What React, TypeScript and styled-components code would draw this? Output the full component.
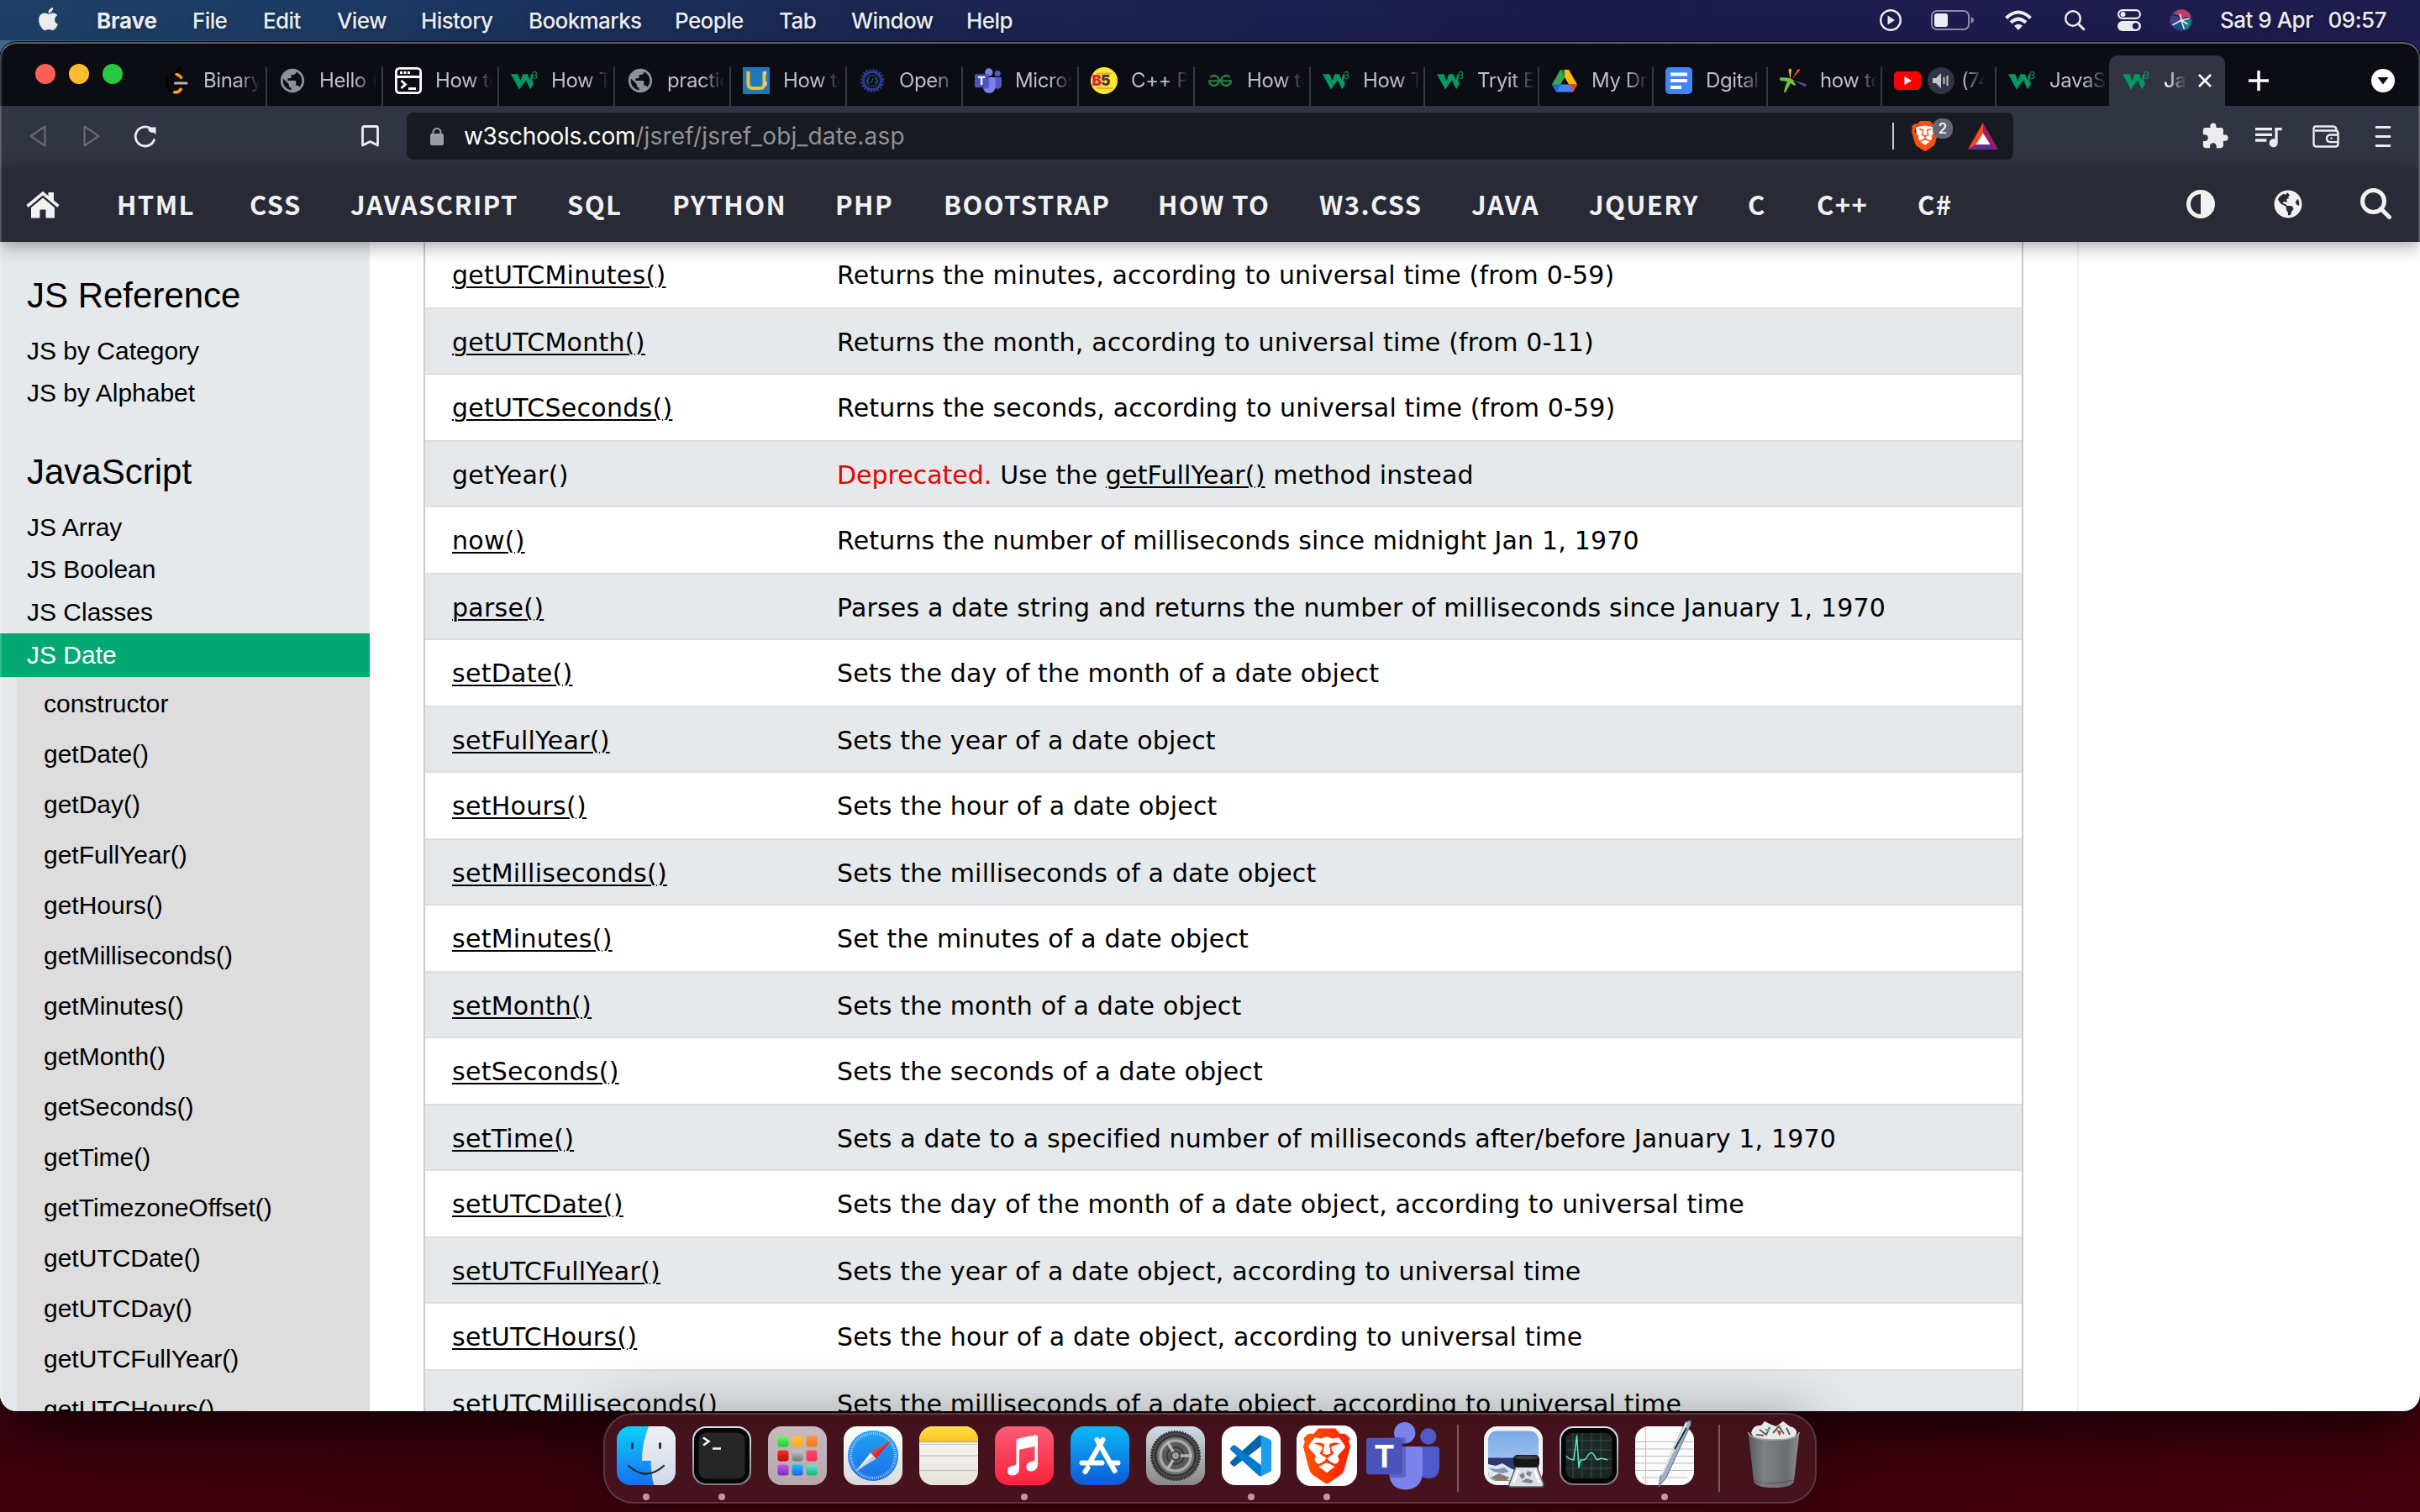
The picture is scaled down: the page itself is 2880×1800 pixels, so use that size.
import React from "react";
import styled, { createGlobalStyle, css } from "styled-components";
import { FaApple, FaGlobeAmericas } from "react-icons/fa";
import { SiBrave, SiGeeksforgeeks } from "react-icons/si";
import { MdExtension, MdPublic, MdQueueMusic } from "react-icons/md";

const ui = `Inter, "Liberation Sans", sans-serif`;
const arial = `"Liberation Sans", Arial, sans-serif`;
const verdana = `"DejaVu Sans", Verdana, sans-serif`;
const navFont = `"Noto Sans CJK JP", "Noto Sans", sans-serif`;

const Global = createGlobalStyle`
  * { box-sizing: border-box; }
  html, body { margin: 0; padding: 0; }
  svg { display: block; overflow: visible; flex: none; }
`;

const Desktop = styled.div`
  width: 2880px;
  height: 1800px;
  overflow: hidden;
  display: flex;
  flex-direction: column;
  align-items: center;
  background:
    linear-gradient(90deg, #44698c 0, #262a58 20%, #201e50 60%, #232056 100%) top / 100% 120px no-repeat,
    linear-gradient(90deg, #40000f 0, #3a000d 25%, #3c000d 70%, #47000f 100%);
`;

/* ---------- system menu bar ---------- */

const MenuBar = styled.header`
  width: 100%;
  height: 48px;
  flex: none;
  display: flex;
  align-items: center;
  padding: 0 40px 0 42px;
  margin-bottom: 2px;
  background: linear-gradient(90deg, #1e4068 0, #1d3c65 12%, #1b2f5a 25%, #1a2650 37%, #1c2050 52%, #1c1b4b 66%, #1e1d4e 100%);
  color: #ecedf1;
  font: 500 26px/48px ${ui};
  letter-spacing: -0.6px;
  text-shadow: 0 2px 5px rgba(0, 0, 0, 0.35);
`;

const AppleSlot = styled.div`
  width: 73px;
  display: flex;
  margin-top: -4px;
`;

const MenuItem = styled.span<{ $w: number; $bold?: boolean }>`
  width: ${(p) => p.$w}px;
  flex: none;
  white-space: nowrap;
  padding-top: 1px;
  ${(p) => p.$bold && css`font-weight: 700; letter-spacing: -0.2px;`}
`;

const StatusArea = styled.div`
  margin-left: auto;
  display: flex;
  align-items: center;
  white-space: pre;
`;

const StatusIcon = styled.span<{ $w: number }>`
  width: ${(p) => p.$w}px;
  display: flex;
`;

const Clock = styled.span`
  width: 198px;
  display: flex;
  justify-content: space-between;
  letter-spacing: -0.5px;
`;

/* ---------- browser window ---------- */

const Window = styled.section`
  position: relative;
  width: 100%;
  height: 1630px;
  flex: none;
  display: flex;
  flex-direction: column;
  border-radius: 20px;
  overflow: hidden;
  box-shadow: 0 0 0 1px #05050a, 0 36px 60px -6px rgba(0, 0, 0, 0.62);
  &::after {
    content: "";
    position: absolute;
    inset: 0;
    border-radius: 20px;
    pointer-events: none;
    z-index: 5;
    box-shadow: inset 0 2px 0 rgba(255, 255, 255, 0.34), inset 2px 0 0 rgba(255, 255, 255, 0.2),
      inset -2px 0 0 rgba(255, 255, 255, 0.2);
  }
`;

const TabStrip = styled.div`
  height: 76px;
  flex: none;
  display: flex;
  align-items: flex-end;
  background: #0c0d14;
`;

const TrafficLights = styled.div`
  width: 180px;
  height: 76px;
  display: flex;
  align-items: center;
  gap: 16px;
  padding-left: 42px;
`;

const Light = styled.i<{ $c: string }>`
  width: 24px;
  height: 24px;
  border-radius: 50%;
  background: ${(p) => p.$c};
`;

const TabBox = styled.div<{ $w: number; $active?: boolean; $line?: boolean }>`
  width: ${(p) => p.$w}px;
  height: ${(p) => (p.$active ? 60 : 46)}px;
  flex: none;
  display: flex;
  align-items: center;
  padding: ${(p) => (p.$active ? "0 0 0 16px" : "0 0 14px 14px")};
  font: 400 24px/30px ${ui};
  letter-spacing: -0.4px;
  color: #bdbec2;
  border-right: ${(p) => (p.$line ? "2px solid #383939" : "0")};
  ${(p) => p.$active && css`
    background: #313443;
    color: #fff;
    font-weight: 500;
    border-radius: 10px 10px 0 0;
  `}
`;

const Favicon = styled.span`
  width: 32px;
  height: 32px;
  display: flex;
  align-items: center;
  justify-content: center;
  flex: none;
`;

const TabTitle = styled.span<{ $w: number; $gap: number }>`
  width: ${(p) => p.$w}px;
  margin-left: ${(p) => p.$gap}px;
  overflow: hidden;
  white-space: nowrap;
  mask-image: linear-gradient(90deg, #000 calc(100% - 26px), transparent);
`;

const AudioBadge = styled.span`
  width: 32px;
  height: 32px;
  margin-left: 8px;
  border-radius: 50%;
  background: #313443;
  display: flex;
  align-items: center;
  justify-content: center;
  flex: none;
`;

const CloseSlot = styled.span`
  margin-left: 14px;
`;

const StripButtons = styled.div`
  flex: 1;
  height: 60px;
  display: flex;
  align-items: center;
  justify-content: space-between;
  padding: 0 30px 0 28px;
`;

const Toolbar = styled.div`
  height: 74px;
  flex: none;
  display: flex;
  align-items: center;
  background: #313443;
  padding: 0 35px 2px;
`;

const ToolSlot = styled.span<{ $w: number }>`
  width: ${(p) => p.$w}px;
  display: flex;
  flex: none;
`;

const AddressBar = styled.div`
  width: 1912px;
  height: 56px;
  border-radius: 8px;
  background: #181a21;
  display: flex;
  align-items: center;
  padding: 0 18px 0 28px;
  font: 400 28px/56px ${ui};
  color: #909295;
  margin-right: 223px;
`;

const Host = styled.span`
  color: #fff;
  letter-spacing: -0.3px;
  margin-left: 24px;
`;

const Path = styled.span`
  letter-spacing: 0.2px;
  flex: 1;
`;

const Divider = styled.i`
  width: 2px;
  height: 32px;
  background: #c9cacd;
  margin-right: 22px;
`;

const Shield = styled.span`
  position: relative;
  width: 66px;
  display: flex;
  color: #fb542b;
`;

const ShieldCount = styled.b`
  position: absolute;
  left: 24px;
  top: -3px;
  width: 24px;
  height: 24px;
  border-radius: 10px;
  background: #636674;
  color: #fff;
  font: 500 17px/24px ${ui};
  text-align: center;
`;

const ToolIcons = styled.div`
  display: flex;
  align-items: center;
  color: #ececee;
`;

/* ---------- site ---------- */

const SiteNav = styled.nav`
  position: relative;
  z-index: 2;
  height: 88px;
  flex: none;
  display: flex;
  align-items: center;
  background: #282a35;
  padding: 0 34px 0 31px;
  color: #f1f1f1;
  box-shadow: 0 4px 20px rgba(0, 0, 0, 0.38);
`;

const HomeSlot = styled.span`
  width: 108px;
`;

const NavLink = styled.a<{ $w: number }>`
  width: ${(p) => p.$w}px;
  font: 700 31px/86px ${navFont};
  padding-bottom: 2px;
  letter-spacing: 1.4px;
  white-space: nowrap;
`;

const NavTools = styled.div`
  margin-left: auto;
  display: flex;
  align-items: center;
  gap: 69.5px;
  padding-bottom: 3px;
`;

const Page = styled.div`
  flex: 1;
  min-height: 0;
  display: flex;
  background: #fff;
  overflow: hidden;
  color: #000;
`;

const Sidebar = styled.aside`
  width: 440px;
  flex: none;
  padding-top: 38px;
  background: #e5e9eb;
  font: 400 30px/52.5px ${arial};
`;

const SideHeading = styled.h2`
  margin: 0 0 15.7px;
  padding-left: 32px;
  font: 400 42px/51px ${arial};
  height: 50px;
  ul + & {
    margin-top: 43px;
  }
`;

const SideList = styled.ul`
  list-style: none;
  margin: 0;
  padding: 0;
`;

const SideItem = styled.li<{ $on?: boolean }>`
  padding-left: 32px;
  height: ${(p) => (p.$on ? 52 : 50.67)}px;
  ${(p) => p.$on && css`background: #00a971; color: #fff;`}
`;

const SubList = styled(SideList)`
  margin-left: 20px;
  padding: 2px 0 0 32px;
  background: #ddd;
  line-height: 60px;
`;

const Main = styled.main`
  width: 2034px;
  flex: none;
  padding-left: 64px;
  border-right: 2px solid #f1f1f1;
`;

const RefTable = styled.div`
  width: 1904px;
  height: 100%;
  border: solid #ccc;
  border-width: 0 2px;
  font: 400 30px/35px ${verdana};
  letter-spacing: 0.17px;
`;

const Row = styled.div<{ $alt: boolean }>`
  display: grid;
  grid-template-columns: 458px 1fr;
  align-items: center;
  height: ${(p) => (p.$alt ? 78 : 80)}px;
  padding: ${(p) => (p.$alt ? "3px 0 0 32px" : "0 0 0 32px")};
  border-bottom: 2px solid #ddd;
  background: ${(p) => (p.$alt ? "#e5e9eb" : "#fff")};
  white-space: nowrap;
`;

const Link = styled.a`
  text-decoration: underline;
  text-decoration-thickness: 2px;
  text-underline-offset: 2.5px;
`;

const Name = styled.span`
  letter-spacing: 0.28px;
`;

const Deprecated = styled.span`
  color: #ee0000;
  letter-spacing: 0;
`;

/* ---------- dock ---------- */

const Dock = styled.footer`
  position: relative;
  z-index: 6;
  width: 1444px;
  height: 108px;
  flex: none;
  margin-top: 2px;
  padding-left: 4px;
  display: flex;
  border-radius: 36px;
  border: 2px solid #613540;
  background: linear-gradient(#42121c, #46121e);
  box-shadow: 0 0 70px rgba(0, 0, 0, 0.3), 0 0 0 1px rgba(0, 0, 0, 0.4);
`;

const DockItem = styled.div`
  width: 90px;
  padding-top: 14px;
  display: flex;
  flex-direction: column;
  align-items: center;
  gap: 10px;
  flex: none;
`;

const RunningDot = styled.i`
  width: 8px;
  height: 8px;
  border-radius: 50%;
  background: #c8959f;
`;

const DockLine = styled.i<{ $w: number }>`
  width: ${(p) => p.$w}px;
  display: flex;
  justify-content: center;
  padding-top: 12px;
  &::before {
    content: "";
    width: 2px;
    height: 80px;
    background: #83555f;
  }
`;

/* ---------- favicons ---------- */

const W3 = () => (
  <svg width="32" height="32" viewBox="0 0 32 32" fill="#059862" fontFamily="Inter, sans-serif">
    <path d="M0 8.300H8.500L11.500 16l2.700-7.700H20l2.500 7 1.800-7H27l-2 6.200 2 5.500-4 6.300L18 15.500 9.800 26.500z" />
    <text x="24.800" y="14" fontSize="12" fontWeight="400">3</text>
  </svg>
);

function TeamsArt() {
  return (
    <>
      <circle cx="65.800" cy="12" r="9.700" fill="#5059c9" />
      <path d="M50 24h25q4 0 4 4v20q0 14-13 14-9 0-14-8z" fill="#5059c9" />
      <circle cx="37.700" cy="7.700" r="12.700" fill="#7b83eb" />
      <path d="M19 24h36q4 0 4 4v27q-1 20-20.500 20.500Q20 75 19 55z" fill="#7b83eb" />
      <path d="M19 24h20v33q0 4-4 4H20q-1-3-1-6zM25 13h10q4 0 4 4v3q-8 2-14-7z" fill="#4049a0" opacity=".5" />
      <rect x="-8" y="13.700" width="43" height="43.500" rx="4" fill="#4b53bc" />
      <text x="13.500" y="48.500" fontSize="37" fontWeight="700" textAnchor="middle" fill="#fff" fontFamily="Inter, sans-serif">T</text>
    </>
  );
}

const favicons: Record<string, React.ReactNode> = {
  leet: (
    <svg width="32" height="32" viewBox="0 0 32 32" fill="none" strokeWidth="3.200" strokeLinecap="round">
      <path d="M19.500 2.500L6.500 13.500q-4.500 5-1 10l4 5" stroke="#020204" />
      <path d="M15 9.500q2.500-2.500 7.500 4M12.500 29q5 3 9.500-4" stroke="#ffa116" strokeLinecap="butt" strokeWidth="3.600" />
      <path d="M14.500 19H28" stroke="#b3b3b3" />
    </svg>
  ),
  globe: <MdPublic size={34} color="#8c929b" />,
  term: (
    <svg width="32" height="32" viewBox="0 0 32 32" fill="none" stroke="#fff" strokeWidth="2.800">
      <rect x="1.400" y="1.400" width="29.200" height="29.200" rx="4" />
      <path d="M1 11.500H31M7.500 16l5 4.500-5 4.500M16 25.500h9" />
      <path d="M6 6.500h3M10.500 6.500h3M15 6.500h3" strokeWidth="3" />
    </svg>
  ),
  w3: <W3 />,
  u: (
    <svg width="32" height="32" viewBox="0 0 32 32" fill="none">
      <rect width="32" height="32" fill="#1f78b8" />
      <path d="M6.500 5v15q0 5 5 5h9q5 0 5-5V5" stroke="#f0c22c" strokeWidth="4" />
      <path d="M26.500 5v4M27 17v5" stroke="#e8c6d8" strokeWidth="3" />
    </svg>
  ),
  mandala: (
    <svg width="30" height="30" viewBox="0 0 30 30" fill="none" stroke="#2b3a92">
      <circle cx="15" cy="15" r="13" strokeWidth="2.500" strokeDasharray="2.200 1.900" />
      <circle cx="15" cy="15" r="10.500" strokeWidth="3" />
      <circle cx="15" cy="15" r="6.500" strokeWidth="1.200" stroke="#24506e" />
      <path d="M12 12l-3 3 3 3M18 12l3 3-3 3M16 12l-2 6" stroke="#2f5fae" />
    </svg>
  ),
  teams: (
    <svg width="32" height="32" viewBox="-8 -5 87 80">
      <TeamsArt />
    </svg>
  ),
  b5: (
    <svg width="32" height="32" viewBox="0 0 32 32" fontFamily="Inter, sans-serif" fontWeight="900">
      <circle cx="16" cy="16" r="16" fill="#ffe92b" />
      <path d="M7 7.500h18M7 25h19" stroke="#f7a13c" strokeWidth="2" />
      <text x="1.500" y="22" fontSize="17" fill="#e0223c">B</text>
      <text x="12" y="22" fontSize="17" fill="#4a2b4a">5</text>
    </svg>
  ),
  gfg: <SiGeeksforgeeks size={28} color="#2a7d45" />,
  drive: (
    <svg width="30" height="27" viewBox="0 0 30 27">
      <path d="M10 0L0 17.500 5 26.500 15 9z" fill="#34a853" />
      <path d="M10 0h10l10 17.500H20z" fill="#fbbc04" />
      <path d="M10 0h5l0 9z" fill="#188038" />
      <path d="M5 26.500L10 17.500H30L25 26.500z" fill="#4285f4" />
      <path d="M20 17.500H30L25 26.500z" fill="#ea4335" />
      <path d="M0 17.500h10L5 26.500z" fill="#1967d2" />
    </svg>
  ),
  docs: (
    <svg width="32" height="32" viewBox="0 0 32 32">
      <rect width="32" height="32" rx="5" fill="#4285f4" />
      <path d="M6 8.500h20M6 16h20M6 24h13" stroke="#fff" strokeWidth="4" />
    </svg>
  ),
  splash: (
    <svg width="32" height="32" viewBox="0 0 32 32">
      <path d="M12.500 15L10.500 3q2-3 3.500 0z" fill="#f4b942" />
      <path d="M15 14l6-11q3-2 3 1z" fill="#e5484d" />
      <path d="M16 15.500l14 4q3 2 0 3.500z" fill="#5b4a9c" />
      <path d="M12 13L1 12q-2 2 0 4l8 1q-3 6-4 13l2 0 6-11q2 2 5 3l1-1q-2-3-3-6z" fill="#6cc644" />
    </svg>
  ),
  yt: (
    <svg width="32" height="22" viewBox="0 0 32 22">
      <rect width="32" height="22" rx="5" fill="#f00" />
      <path d="M12.500 6v10l8.500-5z" fill="#fff" />
    </svg>
  ),
};

type TabData = { icon: string; title: string; w: number };
const tabs: TabData[] = [
  ["leet", "Binary S", 138], ["globe", "Hello (", 138], ["term", "How to", 138], ["w3", "How TO", 138],
  ["globe", "practic", 138], ["u", "How to", 138], ["mandala", "Open S", 138], ["teams", "Micros", 138],
  ["b5", "C++ Pr", 138], ["gfg", "How to", 138], ["w3", "How TO", 136], ["w3", "Tryit Ed", 136],
  ["drive", "My Driv", 136], ["docs", "Dgital", 136], ["splash", "how to", 136],
].map(([icon, title, w]) => ({ icon, title, w }) as TabData);

/* ---------- dock icons ---------- */

const Tile = ({ fill, children, r = 16 }: { fill: string; children?: React.ReactNode; r?: number }) => (
  <svg width="70" height="70" viewBox="0 0 70 70">
    <rect width="70" height="70" rx={r} fill={fill} />
    {children}
  </svg>
);

const Gradients = () => (
  <svg width="0" height="0">
    <defs>
      {[
        ["gFinder", "#0bd0fb", "#1a6ff2"], ["gFace", "#f1f0f2", "#cfd9e8"], ["gMetal", "#d6e6f2", "#7b7b7b"],
        ["gLaunch", "#c6bbc0", "#b8a6ab"], ["gWhite", "#ffffff", "#dadada"], ["gSafari", "#1fa5f3", "#1e6de8"],
        ["gYellow", "#fbe14e", "#fec21a"], ["gNote", "#faf9f8", "#e6e3dc"], ["gMusic", "#fb5c74", "#fa233b"],
        ["gStore", "#0bb9f7", "#1158d8"], ["gGear", "#cfdde6", "#8a8783"], ["gSky", "#7aa8e6", "#b6d4f6"],
        ["gGreen", "#7cee73", "#13cf30"], ["gGold", "#fdc837", "#faa918"],
        ["gOrange", "#f5943a", "#f07c1c"], ["gRed", "#f3352c", "#b90606"], ["gGrey", "#c3cbd0", "#70757a"],
        ["gPink", "#fb4e70", "#fa2c50"], ["gPurple", "#c45bea", "#7a2bbf"], ["gBlue", "#16c9fb", "#1362ea"],
        ["gTeal", "#6ae7cf", "#16b57e"],
      ].map(([id, a, b]) => (
        <linearGradient key={id} id={id} x2="0" y2="1">
          <stop stopColor={a} />
          <stop offset="1" stopColor={b} />
        </linearGradient>
      ))}
      <linearGradient id="gLion">
        <stop stopColor="#ff5500" />
        <stop offset="1" stopColor="#ff1e00" />
      </linearGradient>
      <linearGradient id="gGlass">
        <stop stopColor="#55595c" />
        <stop offset=".3" stopColor="#7d8284" />
        <stop offset=".75" stopColor="#6a6e71" />
        <stop offset="1" stopColor="#8b8f92" />
      </linearGradient>
    </defs>
  </svg>
);

const launchFills = ["gGreen", "gGold", "gOrange", "gRed", "gGrey", "gPink", "gPurple", "gBlue", "gTeal"];

const dockApps: { name: string; running?: boolean; art: React.ReactNode }[] = [
  {
    name: "finder", running: true,
    art: (
      <Tile fill="url(#gFinder)">
        <path d="M38 0h16a16 16 0 0 1 16 16v38a16 16 0 0 1-16 16H44q-3-13-3.500-29H30Q30 20 38 0z" fill="url(#gFace)" />
        <path d="M18.500 20.500v5M51.500 20.500v5" stroke="#28323f" strokeWidth="3" strokeLinecap="round" />
        <path d="M14 47q21 19 42 0" fill="none" stroke="#1f2a38" strokeWidth="2.200" strokeLinecap="round" />
      </Tile>
    ),
  },
  {
    name: "terminal", running: true,
    art: (
      <Tile fill="url(#gMetal)">
        <rect x="2" y="2" width="66" height="66" rx="14.500" fill="#050505" />
        <rect x="7.500" y="7.500" width="55" height="55" rx="9" fill="#262626" />
        <path d="M13 13.500l6.500 4.500-6.500 4.500M24 26.500h10" fill="none" stroke="#fff" strokeWidth="2.500" />
      </Tile>
    ),
  },
  {
    name: "launchpad",
    art: (
      <Tile fill="url(#gLaunch)">
        {launchFills.map((f, i) => (
          <rect key={f} x={11.5 + (i % 3) * 17} y={11.5 + Math.floor(i / 3) * 17} width="13" height="13" rx="3" fill={`url(#${f})`} />
        ))}
      </Tile>
    ),
  },
  {
    name: "safari",
    art: (
      <Tile fill="url(#gWhite)">
        <circle cx="35" cy="35" r="30" fill="url(#gSafari)" />
        <circle cx="35" cy="35" r="26.500" fill="none" stroke="#b9dcfa" strokeWidth="3.500" strokeDasharray=".8 1.500" />
        <path d="M57 16L32 31.500l6.500 7z" fill="#f0403a" />
        <path d="M14.500 53.500L32 31.500l6.500 7z" fill="#f2f2f2" />
        <path d="M57 16L35.300 35l3.200 3.500z" fill="#c92b30" />
        <path d="M14.500 53.500L35.300 35l3.200 3.500z" fill="#c9cdd2" />
      </Tile>
    ),
  },
  {
    name: "notes",
    art: (
      <Tile fill="url(#gNote)">
        <path d="M0 18v-2a16 16 0 0 1 16-16h38a16 16 0 0 1 16 16v2z" fill="url(#gYellow)" />
        <path d="M0 18.500h70" stroke="#b9b0a0" strokeWidth="1.500" />
        <path d="M1 21.500h68" stroke="#a9a6a0" strokeWidth="1.200" strokeDasharray="1.200 1.200" />
        <path d="M0 35h70M0 52.500h70" stroke="#cac8c4" strokeWidth="1.300" />
      </Tile>
    ),
  },
  {
    name: "music", running: true,
    art: (
      <Tile fill="url(#gMusic)">
        <path d="M25.500 17.500q0-2.500 2.500-3l20-4q3-.5 3 2V45q-.5 8.500-8 8.500-5.500 0-5.500-5 0-5.500 6-6.500 4-.5 4-3V24l-18.500 3.800V50q-.5 8.500-8 8.500-6 0-6-5.200 0-5.300 6-6.300 4-.5 4.500-3z" fill="#fff" />
      </Tile>
    ),
  },
  {
    name: "appstore",
    art: (
      <Tile fill="url(#gStore)">
        <g fill="none" stroke="#fff" strokeWidth="6" strokeLinecap="round">
          <path d="M38.500 16L23.500 42M31.500 16L52.500 53M13.500 43.500h24M47 43.500h9.500M20.500 49.500l-3 4.500" />
        </g>
      </Tile>
    ),
  },
  {
    name: "settings",
    art: (
      <Tile fill="url(#gGear)">
        <circle cx="35" cy="35" r="29" fill="#4a4a4a" />
        <circle cx="35" cy="35" r="28.500" fill="none" stroke="#2c2c2c" strokeWidth="3" strokeDasharray="1.800 1.500" />
        <circle cx="35" cy="35" r="23.500" fill="#6e6e6e" stroke="#2e2e2e" strokeWidth="2" />
        <circle cx="35" cy="35" r="18" fill="#5a5a58" stroke="#a8a8a8" strokeWidth="3.500" />
        <circle cx="35" cy="35" r="10" fill="none" stroke="#3a3a3a" strokeWidth="2" />
        <path d="M35 35h20M35 35L25 18M35 35L25 52" stroke="#b5b5b5" strokeWidth="3.500" />
        <circle cx="35" cy="35" r="5" fill="#9c9c9c" stroke="#333" strokeWidth="1.500" />
      </Tile>
    ),
  },
  {
    name: "vscode", running: true,
    art: (
      <Tile fill="#fff">
        <g transform="translate(10 10.500) scale(.49)">
          <path d="M96.460 10.800L75.860.87a6.230 6.230 0 0 0-7.100 1.200L1.300 63.580a4.170 4.170 0 0 0 0 6.170l5.500 5a4.170 4.170 0 0 0 5.300.24l81.300-61.700c2.700-2.100 6.600-.1 6.600 3.300z" fill="#0065a9" />
          <path d="M96.460 89.200l-20.600 9.900a6.230 6.230 0 0 1-7.100-1.200L1.300 36.400a4.170 4.170 0 0 1 0-6.170l5.500-5a4.170 4.170 0 0 1 5.300-.24l81.300 61.700c2.700 2.100 6.600.1 6.600-3.300z" fill="#007acc" />
          <path d="M75.860 99.130a6.230 6.230 0 0 1-7.100-1.200c2.300 2.300 6.250.67 6.250-2.600V4.670c0-3.270-3.950-4.900-6.250-2.600a6.230 6.230 0 0 1 7.100-1.200l20.600 9.900A6.250 6.250 0 0 1 100 16.400v67.200a6.250 6.250 0 0 1-3.540 5.600z" fill="#1f9cf0" />
        </g>
      </Tile>
    ),
  },
  {
    name: "brave", running: true,
    art: (
      <svg width="70" height="70" viewBox="0 0 70 70">
        <rect x="-1" y="-1" width="72" height="72" rx="17" fill="#fff" />
        <SiBrave x={2} y={2.5} size={66} fill="url(#gLion)" />
      </svg>
    ),
  },
  { name: "teams", art: <svg width="70" height="70" viewBox="0 0 70 70"><TeamsArt /></svg> },
];

const recentApps: typeof dockApps = [
  {
    name: "preview",
    art: (
      <Tile fill="#f4f4f4">
        <rect x="5" y="5.500" width="60" height="59" rx="10" fill="url(#gSky)" />
        <path d="M5 37.500h60V54q0 10.500-10 10.500H15Q5 64.500 5 54z" fill="#2b3a72" />
        <path d="M5 45l9 2 8-3 8 5 6 3v12H15Q5 64.500 5 54z" fill="#dfe6f0" />
        <path d="M6 50l10 1 8-2 6 5-8 2-10-2z" fill="#7f93c0" />
        <path d="M8 61l10-5 12 5-3 3.500H15z" fill="#8b7a60" />
        <path d="M38 48h25l8 21q0 3-3 3H33q-4 0-3-3z" fill="#dcdfe3" stroke="#5c6067" strokeWidth="1.500" />
        <path d="M41 52l-6 15M60 52l6 15" stroke="#fff" strokeWidth="2.500" />
        <path d="M42 58l5-3 2 5-4 3zM52 53l5 2-2 5-5-3zM44 66l7-4 8 3-3 3z" fill="#76879a" />
        <rect x="35" y="34" width="31" height="15" rx="5" fill="#161616" />
        <ellipse cx="50.500" cy="37" rx="14" ry="2.600" fill="#3d3d3d" />
      </Tile>
    ),
  },
  {
    name: "activity",
    art: (
      <Tile fill="url(#gMetal)">
        <rect x="2" y="2" width="66" height="66" rx="14.500" fill="#040404" />
        <rect x="7.500" y="8" width="55" height="54" rx="8" fill="#1c2725" />
        <path d="M16 8v54M27 8v54M38 8v54M49 8v54M8 17h54M8 28h54M8 39h54M8 50h54" stroke="#34504a" strokeWidth="1" />
        <path d="M8 35q2 4 9 5l3.500-29L23 49l2-9 3 0q3 0 5-4 5-9 9 0 2 5 5 3t10 1" fill="none" stroke="#5fe0c0" strokeWidth="1.600" strokeLinejoin="round" />
      </Tile>
    ),
  },
  {
    name: "textedit", running: true,
    art: (
      <Tile fill="#fbfbfb">
        <path d="M0 18.500h70M0 27h70M0 35.500h70M0 44h70M0 52.500h70M8 61h54" stroke="#b9bbbf" strokeWidth="1.200" />
        <path d="M12.500 1v68" stroke="#f3b3ae" strokeWidth="1.200" />
        <path d="M28 72l2-12L60-5l6-2 0 5L37 61z" fill="#9fb0c2" stroke="#5d6b7c" strokeWidth="1" />
        <path d="M31 58L61-4" stroke="#e6eef6" strokeWidth="2" />
        <path d="M61 2L47 27" stroke="#27323e" strokeWidth="2" />
      </Tile>
    ),
  },
];

const Trash = () => (
  <svg width="70" height="70" viewBox="0 0 70 70">
    <path d="M8 8q2-10 12-9l4-5 8 4 6 2 8-6 8 6q9 2 8 9l-6 8H14z" fill="#e9e9ea" />
    <path d="M18 4l8 6 4-9M34 8l7-8 6 9M50 2l4 8M14 10l9 1" fill="none" stroke="#5c5f63" strokeWidth="2" />
    <path d="M24 3l7 0-3 4z" fill="#35b8c8" />
    <path d="M38 4l6 2-2 6z" fill="#b0532c" />
    <path d="M4.500 7q3 9 30.500 9T65.500 7L59 65q-2 8-24 8t-24-8z" fill="url(#gGlass)" />
    <path d="M4.500 7q3 9 30.500 9T65.500 7" fill="none" stroke="#a5a8aa" strokeWidth="1.500" />
    <path d="M11.500 64q12 8 47 0" fill="none" stroke="#45484b" strokeWidth="1.500" opacity=".6" />
  </svg>
);

/* ---------- data ---------- */

const menuItems: [string, number][] = [
  ["Brave", 114], ["File", 84], ["Edit", 88], ["View", 100], ["History", 128], ["Bookmarks", 174],
  ["People", 124], ["Tab", 86], ["Window", 137], ["Help", 60],
];

const navItems: [string, number][] = [
  ["HTML", 158], ["CSS", 120], ["JAVASCRIPT", 258], ["SQL", 125], ["PYTHON", 194], ["PHP", 129], ["BOOTSTRAP", 255],
  ["HOW TO", 192], ["W3.CSS", 181], ["JAVA", 140], ["JQUERY", 189], ["C", 82], ["C++", 120], ["C#", 60],
];

const subItems = [
  "constructor", "getDate()", "getDay()", "getFullYear()", "getHours()", "getMilliseconds()", "getMinutes()", "getMonth()",
  "getSeconds()", "getTime()", "getTimezoneOffset()", "getUTCDate()", "getUTCDay()", "getUTCFullYear()", "getUTCHours()",
];

const rows: [string, React.ReactNode][] = [
  ["getUTCMinutes()", "Returns the minutes, according to universal time (from 0-59)"],
  ["getUTCMonth()", "Returns the month, according to universal time (from 0-11)"],
  ["getUTCSeconds()", "Returns the seconds, according to universal time (from 0-59)"],
  ["getYear()", <><Deprecated>Deprecated.</Deprecated> Use the <Link>getFullYear()</Link> method instead</>],
  ["now()", "Returns the number of milliseconds since midnight Jan 1, 1970"],
  ["parse()", "Parses a date string and returns the number of milliseconds since January 1, 1970"],
  ["setDate()", "Sets the day of the month of a date object"],
  ["setFullYear()", "Sets the year of a date object"],
  ["setHours()", "Sets the hour of a date object"],
  ["setMilliseconds()", "Sets the milliseconds of a date object"],
  ["setMinutes()", "Set the minutes of a date object"],
  ["setMonth()", "Sets the month of a date object"],
  ["setSeconds()", "Sets the seconds of a date object"],
  ["setTime()", "Sets a date to a specified number of milliseconds after/before January 1, 1970"],
  ["setUTCDate()", "Sets the day of the month of a date object, according to universal time"],
  ["setUTCFullYear()", "Sets the year of a date object, according to universal time"],
  ["setUTCHours()", "Sets the hour of a date object, according to universal time"],
  ["setUTCMilliseconds()", "Sets the milliseconds of a date object, according to universal time"],
];

function SystemMenu() {
  return (
    <MenuBar>
      <AppleSlot><FaApple size={31} /></AppleSlot>
      {menuItems.map(([t, w], i) => <MenuItem key={t} $w={w} $bold={i === 0}>{t}</MenuItem>)}
      <StatusArea>
        <StatusIcon $w={61}>
          <svg width="26" height="26" viewBox="0 0 26 26" fill="none" stroke="#ecedf1" strokeWidth="2.400">
            <circle cx="13" cy="13" r="11.800" /><path d="M9.500 7.500v11l8.500-5.500z" fill="#ecedf1" stroke="none" />
          </svg>
        </StatusIcon>
        <StatusIcon $w={88}>
          <svg width="51" height="24" viewBox="0 0 51 24">
            <rect x="1" y="1" width="44" height="22" rx="6" fill="none" stroke="#8d8da8" strokeWidth="2" />
            <rect x="4" y="4" width="16" height="16" rx="3" fill="#ecedf1" />
            <path d="M47.500 8q3.500 1.500 3.500 4t-3.500 4z" fill="#8d8da8" />
          </svg>
        </StatusIcon>
        <StatusIcon $w={71}>
          <svg width="32" height="24" viewBox="0 0 32 24" fill="none" stroke="#ecedf1" strokeWidth="4">
            <path d="M1.500 9.500Q16-4.500 30.500 9.500M7 14.800q9-8.500 18 0" /><path d="M16 24l-5-5.200q5-4.200 10 0z" fill="#ecedf1" stroke="none" />
          </svg>
        </StatusIcon>
        <StatusIcon $w={63}>
          <svg width="24" height="24" viewBox="0 0 24 24" fill="none" stroke="#ecedf1" strokeWidth="2.500" strokeLinecap="round">
            <circle cx="10" cy="10" r="8.800" /><path d="M16.500 16.500l6.300 6.300" strokeWidth="3" />
          </svg>
        </StatusIcon>
        <StatusIcon $w={62}>
          <svg width="28" height="26" viewBox="0 0 28 26" fill="none" stroke="#ecedf1">
            <rect x="1.100" y="1.100" width="25.800" height="9.800" rx="4.900" strokeWidth="2.200" />
            <circle cx="6.500" cy="6" r="3" fill="#ecedf1" stroke="none" />
            <rect y="14" width="28" height="12" rx="6" fill="#ecedf1" stroke="none" />
            <circle cx="21.500" cy="20" r="3.700" fill="#1e1d4e" stroke="none" />
          </svg>
        </StatusIcon>
        <StatusIcon $w={60}>
          <svg width="28" height="28" viewBox="0 0 28 28" fill="none">
            <circle cx="14" cy="14" r="14" fill="#232a4e" />
            <path d="M3 8Q8 0 17 1.500q8 2.500 9 11-6-5-12 1Q9 4 3 8z" fill="#b8406e" />
            <path d="M2 9q6-1 12 5Q4 16 2 21q-3-7 0-12z" fill="#46408a" />
            <path d="M14 14q8-4 12.500 0-1 10-9.500 12z" fill="#1f7f84" />
            <path d="M3 20q5-6 11-6l2 12Q7 27 3 20z" fill="#1c4f8f" />
            <path d="M14 14L4 19.500M14 14L12.500 7M14 14l9-2M14 14l3 10M14 14l7 4.500" stroke="#e6e9fb" strokeWidth="1.600" strokeLinecap="round" />
          </svg>
        </StatusIcon>
        <Clock><span>Sat 9 Apr</span><span>09:57</span></Clock>
      </StatusArea>
    </MenuBar>
  );
}

function Tabs() {
  return (
    <TabStrip>
      <TrafficLights><Light $c="#ff5f57" /><Light $c="#febc2e" /><Light $c="#28c840" /></TrafficLights>
      {tabs.map((t, i) => (
        <TabBox key={i} $w={t.w} $line>
          <Favicon>{favicons[t.icon]}</Favicon>
          <TabTitle $w={68} $gap={16}>{t.title}</TabTitle>
        </TabBox>
      ))}
      <TabBox $w={136} $line>
        <Favicon>{favicons.yt}</Favicon>
        <AudioBadge>
          <svg width="20" height="18" viewBox="0 0 20 18">
            <path d="M0 6h4l6-6v18l-6-6H0z" fill="#c3c5c8" /><path d="M13.500 5v8M17.500 3v12" stroke="#c3c5c8" strokeWidth="2" />
          </svg>
        </AudioBadge>
        <TabTitle $w={28} $gap={8}>(74)</TabTitle>
      </TabBox>
      <TabBox $w={134}>
        <Favicon><W3 /></Favicon>
        <TabTitle $w={68} $gap={17}>JavaScr</TabTitle>
      </TabBox>
      <TabBox $w={138} $active>
        <Favicon><W3 /></Favicon>
        <TabTitle $w={27} $gap={17}>Jav</TabTitle>
        <CloseSlot>
          <svg width="16" height="16" viewBox="0 0 16 16"><path d="M1 1l14 14M15 1L1 15" stroke="#fff" strokeWidth="2.600" /></svg>
        </CloseSlot>
      </TabBox>
      <StripButtons>
        <svg width="24" height="24" viewBox="0 0 24 24"><path d="M12 0v24M0 12h24" stroke="#fff" strokeWidth="3.500" /></svg>
        <svg width="28" height="28" viewBox="0 0 28 28"><circle cx="14" cy="14" r="14" fill="#fff" /><path d="M7.500 10h13L14 18.500z" fill="#0c0d14" /></svg>
      </StripButtons>
    </TabStrip>
  );
}

function BrowserBar() {
  return (
    <Toolbar>
      <ToolSlot $w={64}>
        <svg width="20" height="26" viewBox="0 0 20 26" fill="none" stroke="#676a77" strokeWidth="2.200" strokeLinejoin="round"><path d="M18.500 1.500v23L1.500 13z" /></svg>
      </ToolSlot>
      <ToolSlot $w={60}>
        <svg width="20" height="26" viewBox="0 0 20 26" fill="none" stroke="#676a77" strokeWidth="2.200" strokeLinejoin="round"><path d="M1.500 1.500v23L18.500 13z" /></svg>
      </ToolSlot>
      <ToolSlot $w={271}>
        <svg width="27" height="26" viewBox="0 0 27 26" fill="none" stroke="#ececee" strokeWidth="2.800" strokeLinecap="round">
          <path d="M24.500 17.500A11.500 11.500 0 1 1 21 4.500" /><path d="M17.500 2.500h9v9.200q-1-3-4.500-3t-4.500-3z" fill="#ececee" stroke="none" />
        </svg>
      </ToolSlot>
      <ToolSlot $w={54}>
        <svg width="21" height="26" viewBox="0 0 21 26" fill="none" stroke="#ececee" strokeWidth="2.800" strokeLinejoin="round"><path d="M1.500 3.500q0-2 2-2h14q2 0 2 2V24l-9-4.500L1.500 24z" /></svg>
      </ToolSlot>
      <AddressBar>
        <svg width="16" height="21" viewBox="0 0 16 21"><rect y="7" width="16" height="14" rx="2" fill="#9b9da6" /><path d="M3.500 8V5.500a4.500 4.500 0 0 1 9 0V8" fill="none" stroke="#9b9da6" strokeWidth="2" /></svg>
        <Host>w3schools.com</Host>
        <Path>/jsref/jsref_obj_date.asp</Path>
        <Divider />
        <Shield>
          <svg width="30" height="36" viewBox="2.500 0 19 24" preserveAspectRatio="none">
            <path d="M5 5l7-2 7 2-1 9-6 7-6-7z" fill="#fff" />
            <SiBrave size={24} fill="#f9500f" />
          </svg>
          <ShieldCount>2</ShieldCount>
        </Shield>
        <svg width="36" height="32" viewBox="0 0 36 32">
          <path d="M18 0L0 32l10-6 8-13z" fill="#ff4724" /><path d="M18 0l18 32-10-6-8-13z" fill="#9e1f63" /><path d="M0 32l10-6h16l10 6z" fill="#662d91" /><path d="M18 12.500L9.500 26h17z" fill="#fff" />
        </svg>
      </AddressBar>
      <ToolIcons>
        <ToolSlot $w={60}><MdExtension size={34} /></ToolSlot>
        <ToolSlot $w={73}><MdQueueMusic size={40} /></ToolSlot>
        <ToolSlot $w={75}>
          <svg width="32" height="27" viewBox="0 0 32 27" fill="none" stroke="#ececee" strokeWidth="2.400">
            <path d="M28.500 7V6q0-4.500-4-4.500H3.500q-2 0-2 3v17.500q0 3.500 3.500 3.500h22q3.500 0 3.500-3.500V10q0-3.500-3.500-3.500H3" />
            <path d="M31 11.500H22q-5 0-5 4.300t5 4.300h9" />
            <circle cx="22.500" cy="15.800" r="1.200" fill="#ececee" stroke="none" />
          </svg>
        </ToolSlot>
        <svg width="18" height="25" viewBox="0 0 18 25"><path d="M1 1.500h16M1 12.500h16M1 23.500h16" stroke="#ececee" strokeWidth="2.800" strokeLinecap="round" /></svg>
      </ToolIcons>
    </Toolbar>
  );
}

function Site() {
  return (
    <>
      <SiteNav>
        <HomeSlot>
          <svg width="40" height="32" viewBox="0 0 40 32">
            <path d="M26.500 1h6.500v11l-6.500-6z" fill="#f1f1f1" />
            <path d="M1.500 17.500L20 2l18.500 15.500" fill="none" stroke="#f1f1f1" strokeWidth="3.600" />
            <path d="M20 7.500l14 11.700V31.500H23.500v-10h-7v10H6V19.200z" fill="#f1f1f1" />
          </svg>
        </HomeSlot>
        {navItems.map(([t, w]) => <NavLink key={t} $w={w}>{t}</NavLink>)}
        <NavTools>
          <svg width="34" height="34" viewBox="0 0 34 34"><circle cx="17" cy="17" r="14.500" fill="none" stroke="#f1f1f1" strokeWidth="5" /><path d="M17 1a16 16 0 0 1 0 32z" fill="#f1f1f1" /></svg>
          <FaGlobeAmericas size={34} />
          <svg width="37" height="37" viewBox="0 0 37 37" fill="none" stroke="#f1f1f1"><circle cx="15.500" cy="15.500" r="13" strokeWidth="5" /><path d="M24.500 24.500l10 10" strokeWidth="5" strokeLinecap="round" /></svg>
        </NavTools>
      </SiteNav>
      <Page>
        <Sidebar>
          <SideHeading>JS Reference</SideHeading>
          <SideList><SideItem>JS by Category</SideItem><SideItem>JS by Alphabet</SideItem></SideList>
          <SideHeading>JavaScript</SideHeading>
          <SideList>
            <SideItem>JS Array</SideItem><SideItem>JS Boolean</SideItem><SideItem>JS Classes</SideItem><SideItem $on>JS Date</SideItem>
          </SideList>
          <SubList>{subItems.map((t) => <li key={t}>{t}</li>)}</SubList>
        </Sidebar>
        <Main>
          <RefTable>
            {rows.map(([name, text], i) => (
              <Row key={name} $alt={i % 2 === 1}>
                <Name>{name === "getYear()" ? name : <Link>{name}</Link>}</Name>
                <span>{text}</span>
              </Row>
            ))}
          </RefTable>
        </Main>
      </Page>
    </>
  );
}

export default function App() {
  return (
    <Desktop>
      <Global />
      <SystemMenu />
      <Window>
        <Tabs />
        <BrowserBar />
        <Site />
      </Window>
      <Dock>
        {dockApps.map((a) => <DockItem key={a.name}>{a.art}{a.running && <RunningDot />}</DockItem>)}
        <DockLine $w={42} />
        {recentApps.map((a) => <DockItem key={a.name}>{a.art}{a.running && <RunningDot />}</DockItem>)}
        <DockLine $w={40} />
        <DockItem><Trash /></DockItem>
      </Dock>
      <Gradients />
    </Desktop>
  );
}
